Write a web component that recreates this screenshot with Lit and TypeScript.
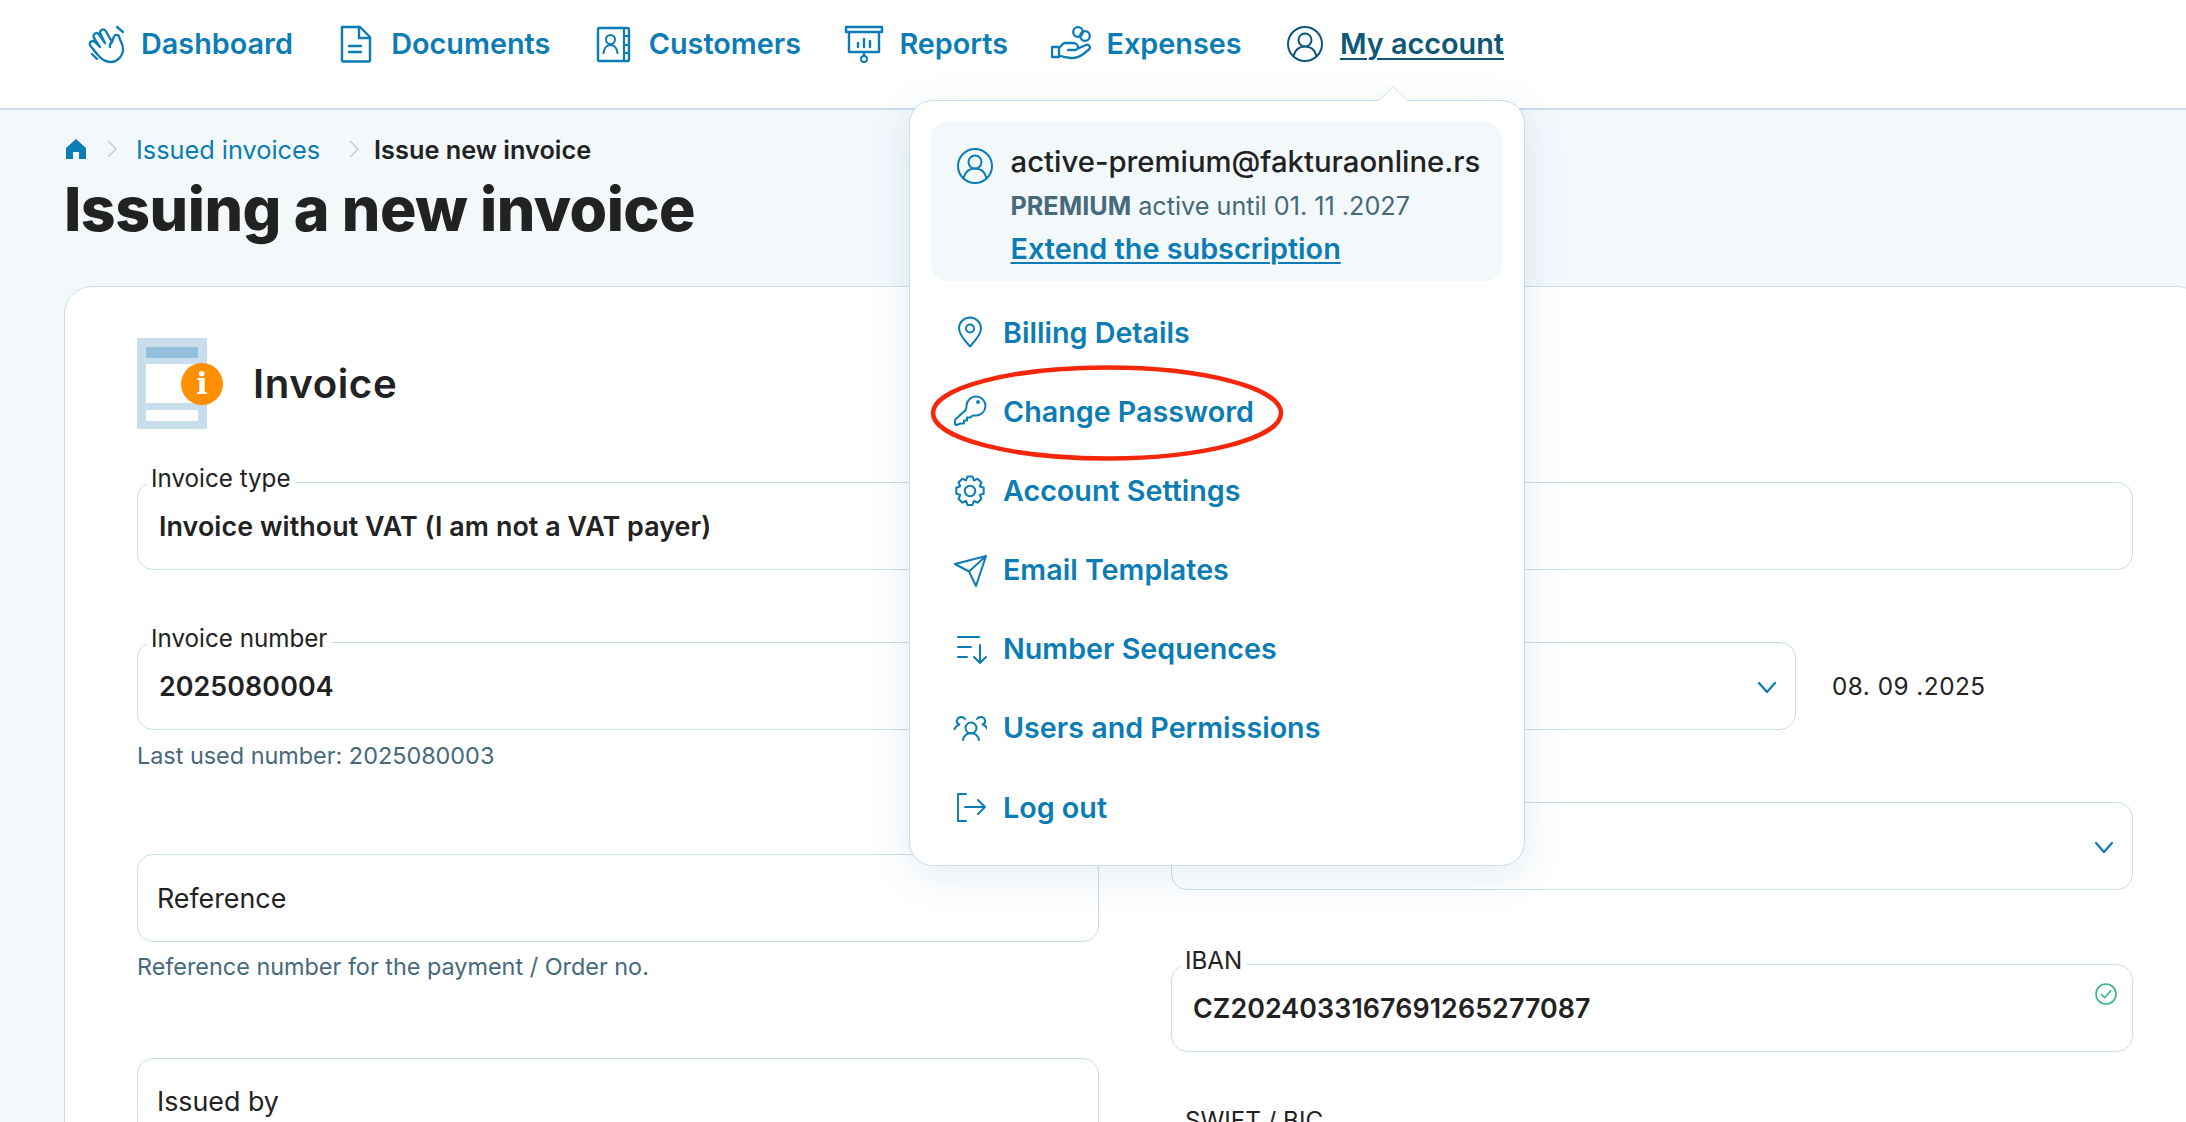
import { LitElement, html, css, svg } from "lit";
import { customElement } from "lit/decorators.js";

const I = (body: unknown, size = 40, vb = 40) => html`<svg class="ic" width=${size} height=${size} viewBox="0 0 ${vb} ${vb}" fill="none" stroke="currentColor" stroke-width="2" stroke-linecap="round" stroke-linejoin="round">${body}</svg>`;

const userPaths = svg`<circle cx="20" cy="20" r="17"/><circle cx="20" cy="16" r="6.500"/><path d="M8.500 32c1.500-6 6-9.500 11.500-9.500S30 26 31.500 32"/>`;

const nav = [
  ["Dashboard", svg`<path d="M11 30 4.500 22a3 3 0 0 1 4.500-4l5 5-6-9a3 3 0 0 1 5-3.500l6 8.500-4.500-9a3 3 0 0 1 5.200-3L26 18l2-5.500a2.800 2.800 0 0 1 5.300 1c.5 3 3.700 6 3.700 11.500 0 7-5.500 13-12.500 13-5 0-9.500-3-13.500-8Z" stroke-width="2.300"/><path d="M26 18c-1.500 1-2.500 2.500-2 5" stroke-width="2.300"/><path d="M31 3l6 5M6 30l5 5" stroke-width="2.300"/>`],
  ["Documents", svg`<path d="M6 3h18l10 10v23a1.500 1.500 0 0 1-1.500 1.500h-25A1.500 1.500 0 0 1 6 36V3Z" stroke-width="2.400"/><path d="M23 3v11h11M13 22h12M13 28h12" stroke-width="2.400"/>`],
  ["Customers", svg`<rect x="4" y="4" width="31" height="33" rx="1.500" stroke-width="2.400"/><circle cx="16.500" cy="15.500" r="4.500"/><path d="M9.500 29c.5-5 3.500-8 7-8s6.500 3 7 8M30 4v33M30 12h5M30 21h5M30 29h5" stroke-width="2.200"/>`],
  ["Reports", svg`<path d="M2 3h36v5H2zM5 8v20h30V8M20 28v4" stroke-width="2.400"/><circle cx="20" cy="35" r="3"/><path d="M14 23v-4M20 23v-8M26 23v-6" stroke-width="2.400"/>`],
  ["Expenses", svg`<path d="M1 23h7v10H1zM8 24c2-1 3-5 6-5h8c3 0 5 2 5 4s-2 3-4 3h-6M27 24.500l8-3.500c3-1 5 2 3 4.500l-5 4c-4 3-8 5-13 4.500-4-.3-8-1-12-2.500" stroke-width="2.300"/><circle cx="27" cy="8" r="4.800" stroke-width="2.300"/><circle cx="34" cy="12" r="4.800" stroke-width="2.300"/>`],
];

const menu = [
  ["Billing Details", svg`<path d="M17 30.500C11 24 6 18 6 12.500a11 11 0 0 1 22 0C28 18 23 24 17 30.500Z"/><circle cx="17" cy="12.500" r="4"/>`],
  ["Change Password", svg`<circle cx="25" cy="7" r=".9" fill="currentColor"/><path d="M13.500 10.500a9.500 9.500 0 1 1 9 10c-1.500 0-2.500-.2-3.500 .3l-1.500 1.700h-3.500v3H11v3H7.500L3.500 30c-1 0-1.500-.5-1.500-1.500v-2.500c0-1 .3-1.500.8-2l9.700-8.800c.5-1 1-2.700 1-4.200Z"/>`],
  ["Account Settings", svg`<circle cx="17" cy="17" r="5.200"/><path d="M14.500 2.500h5l1.500 4 3.500-1.800 4 3.800-1.800 3.700 4 1.500v6l-4 1.300 1.800 3.700-4 4-3.500-1.800-1.500 4h-5l-1.500-4-3.500 1.800-4-4 1.800-3.700-4-1.300v-6l4-1.500-1.800-3.700 4-3.800 3.500 1.800Z"/>`],
  ["Email Templates", svg`<path d="M2 11 33 3 23 33l-7-14.500Zm14 7.500L33 3"/>`],
  ["Number Sequences", svg`<path d="M5 5h21M5 15h13M5 25h9M27 13v18M21 25l6 6 6-6"/>`],
  ["Users and Permissions", svg`<circle cx="18" cy="17" r="5.500"/><path d="M10 29c.5-4 4-7 8-7s7.500 3 8 7M1.500 18c1-2 3-4 5-4.500-2.500-1-3-3-2.500-4.500 .8-3 5.500-4.500 8-1M34.500 18c-1-2-3-4-5-4.500 2.500-1 3-3 2.500-4.500-.8-3-5.500-4.500-8-1"/>`],
  ["Log out", svg`<path d="M13 3H5v27h8M12 16h20M25 9l7 7-7 7" stroke-width="1.900"/>`],
];

const chevron = html`<svg class="chev" width="20" height="13" viewBox="0 0 20 13" fill="none" stroke="currentColor" stroke-width="2.300" stroke-linecap="round" stroke-linejoin="round"><path d="M2 2l8 9 8-9"/></svg>`;

@customElement("app-root")
export class AppRoot extends LitElement {
  static styles = css`
    :host { display: block; position: relative; height: 1122px; overflow: hidden; background: #f3f8fb; font-family: Inter, "Liberation Sans", sans-serif; color: #222; }
    * { box-sizing: border-box; }
    svg { display: block; flex: none; }
    .topnav { height: 110px; background: #fff; border-bottom: 2px solid #c9dded; display: flex; align-items: flex-start; gap: 43.400px; padding: 24px 0 0 86px; color: #0b7db4; }
    .nav-item { display: flex; align-items: center; gap: 15px; font-size: 28.800px; font-weight: 600; line-height: 40px; white-space: nowrap; }
    .nav-item.current { color: #0e5776; }
    .nav-item.current span { text-decoration: underline; text-underline-offset: 4px; text-decoration-thickness: 2px; }
    main { padding: 24px 0 0 64px; width: 2205px; }
    .crumbs { display: flex; align-items: center; height: 30px; font-size: 25.300px; color: #0b7db4; }
    .crumbs .home { margin: 0 21px 0 2px; }
    .crumbs .sep { color: #c3ccd2; }
    .crumbs .s1 { margin-right: 19px; }
    .crumbs .s2 { margin-right: 15px; }
    .crumbs a { margin-right: 29px; }
    .crumbs b { color: #222; font-weight: 600; font-size: 25.300px; }
    h1 { margin: 8px 0 0; font-size: 60.800px; line-height: 74px; font-weight: 800; letter-spacing: -.5px; color: #222; }
    .card { margin-top: 40px; background: #fff; border: 1.500px solid #c9dded; border-radius: 28px; padding: 51px 72px 0; height: 900px; }
    .sec { display: flex; align-items: center; gap: 46px; height: 91px; }
    .sec h2 { margin: 0; font-size: 40.200px; font-weight: 600; letter-spacing: .6px; color: #222; }
    .docicon { position: relative; width: 70px; height: 91px; background: #c8deed; }
    .docicon i { position: absolute; left: 9px; width: 52px; background: #fff; }
    .docicon .a { top: 9px; height: 11px; background: #93bfdc; }
    .docicon .b { top: 26px; height: 39px; }
    .docicon .c { top: 72px; height: 11px; }
    .docicon .info { position: absolute; left: 44px; top: 25px; width: 42px; height: 42px; border-radius: 50%; background: #ff8f00; color: #fff; font: 700 30px/42px "DejaVu Serif", serif; text-align: center; }
    .cols { margin-top: 53px; display: grid; grid-template-columns: 962px 962px; column-gap: 72px; }
    .col { display: flex; flex-direction: column; min-width: 0; }
    .field { position: relative; height: 88px; border: 1.500px solid #c9dded; border-radius: 16px; background: #fff; display: flex; align-items: center; padding-left: 20px; font-size: 26.800px; flex: none; }
    .field.val { font-weight: 600; padding-left: 21px; letter-spacing: .1px; }
    .field.plain { padding-left: 19px; }
    .lbl { position: absolute; left: 9px; top: -18px; padding: 0 4px; background: #fff; font-size: 24.200px; line-height: 28px; font-weight: 400; letter-spacing: 0; color: #222; }
    .hint { margin-top: 10px; font-size: 23.400px; line-height: 30px; color: #46697c; }
    .hint.first { margin-top: 11px; }
    .chev { position: absolute; right: 18px; top: 38px; color: #0b7db4; }
    .ok { position: absolute; right: 15px; top: 18px; }
    .mt72 { margin-top: 72px; } .mt74 { margin-top: 74px; }
    .mt83 { margin-top: 83px; } .mt76 { margin-top: 76px; }
    .dateline { display: flex; align-items: center; gap: 36px; font-size: 24.300px; letter-spacing: .5px; color: #222; }
    .dateline .field { width: 625px; }
    .issued { align-items: flex-start; padding-top: 26px; height: 130px; }
    .pop { position: absolute; left: 909px; top: 100px; width: 616px; height: 766px; background: #fff; border: 1.500px solid #c9dded; border-radius: 24px; box-shadow: 0 10px 40px rgba(60,120,170,.14); padding: 21px 22px 0 21px; }
    .arrow { position: absolute; left: 473px; top: -11px; width: 20px; height: 20px; background: #fff; border-left: 1.500px solid #dbe8f2; border-top: 1.500px solid #dbe8f2; transform: rotate(45deg); }
    .acct { position: relative; height: 159px; background: #f3f8fb; border-radius: 16px; padding: 20px 0 0 79.500px; display: flex; flex-direction: column; }
    .acct .av { position: absolute; left: 24px; top: 24px; color: #0b7db4; }
    .acct .em { font-size: 29.300px; font-weight: 500; line-height: 40px; color: #222; white-space: nowrap; }
    .acct .pl { font-size: 25.200px; line-height: 36px; margin-top: 6px; color: #46697c; white-space: nowrap; }
    .acct .pl b { font-weight: 700; }
    .acct .ext { font-size: 28.800px; font-weight: 600; line-height: 38px; margin-top: 6px; color: #0b7db4; text-decoration: underline; text-decoration-thickness: 2px; text-underline-offset: 3px; white-space: nowrap; }
    .items { position: relative; margin-top: 12px; display: flex; flex-direction: column; color: #0b7db4; }
    .item { height: 79px; display: flex; align-items: center; gap: 16px; padding-left: 22px; font-size: 28.700px; font-weight: 600; white-space: nowrap; }
    .item:last-of-type { padding-top: 2px; }
    .ring { position: absolute; left: -1px; top: 72px; overflow: visible; }
  `;

  render() {
    return html`
      <header class="topnav">
        ${nav.map(([t, p]) => html`<div class="nav-item">${I(p)}<span>${t}</span></div>`)}
        <div class="nav-item current">${I(userPaths)}<span>My account</span></div>
      </header>
      <main>
        <nav class="crumbs">
          <svg class="home" width="20" height="20" viewBox="0 0 20 20" fill="currentColor"><path d="M10 0 0 9v11h7v-7h6v7h7V9Z"/></svg>
          <svg class="sep s1" width="10" height="20" viewBox="0 0 10 20" fill="none" stroke="currentColor" stroke-width="1.500"><path d="M1 2l8 8-8 8"/></svg>
          <a>Issued invoices</a>
          <svg class="sep s2" width="10" height="20" viewBox="0 0 10 20" fill="none" stroke="currentColor" stroke-width="1.500"><path d="M1 2l8 8-8 8"/></svg>
          <b>Issue new invoice</b>
        </nav>
        <h1>Issuing a new invoice</h1>
        <section class="card">
          <div class="sec">
            <div class="docicon"><i class="a"></i><i class="b"></i><i class="c"></i><span class="info">i</span></div>
            <h2>Invoice</h2>
          </div>
          <div class="cols">
            <div class="col">
              <div class="field val"><span class="lbl">Invoice type</span>Invoice without VAT (I am not a VAT payer)</div>
              <div class="field val mt72"><span class="lbl">Invoice number</span>2025080004</div>
              <div class="hint first">Last used number: 2025080003</div>
              <div class="field plain mt83">Reference</div>
              <div class="hint">Reference number for the payment / Order no.</div>
              <div class="field plain issued mt76">Issued by</div>
            </div>
            <div class="col">
              <div class="field"></div>
              <div class="dateline mt72"><div class="field">${chevron}</div><span>08. 09 .2025</span></div>
              <div class="field mt72">${chevron}</div>
              <div class="field val mt74"><span class="lbl">IBAN</span>CZ2024033167691265277087
                <svg class="ok" width="22" height="22" viewBox="0 0 22 22" fill="none" stroke="#35b57c" stroke-width="1.600" stroke-linecap="round" stroke-linejoin="round"><circle cx="11" cy="11" r="10"/><path d="M6.500 11.500l3.200 3.200 6-7"/></svg>
              </div>
              <div class="field val mt72"><span class="lbl">SWIFT / BIC</span></div>
            </div>
          </div>
        </section>
      </main>
      <aside class="pop">
        <div class="arrow"></div>
        <div class="acct">
          <div class="av">${I(userPaths, 40)}</div>
          <div class="em">active-premium@fakturaonline.rs</div>
          <div class="pl"><b>PREMIUM</b> active until 01. 11 .2027</div>
          <div class="ext">Extend the subscription</div>
        </div>
        <div class="items">
          ${menu.map(([t, p]) => html`<div class="item">${I(p, 34, 34)}<span>${t}</span></div>`)}
          <svg class="ring" width="354" height="96" viewBox="0 0 354 96" fill="none"><ellipse cx="177" cy="48" rx="174" ry="45.500" stroke="#f5270a" stroke-width="4.500"/></svg>
        </div>
      </aside>
    `;
  }
}
